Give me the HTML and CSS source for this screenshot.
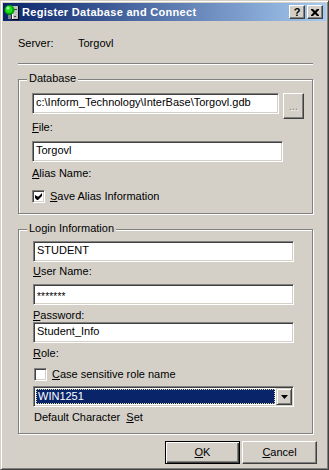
FILE: index.html
```html
<!DOCTYPE html>
<html>
<head>
    <meta charset="utf-8">
    <title>Register Database and Connect</title>
    <link rel="stylesheet" href="styles.css">
</head>
<body>
<div class="window">
    <div class="titlebar">
        <svg class="app-icon" width="16" height="16" viewBox="0 0 16 16">
            <rect x="8" y="2" width="7" height="14" fill="#c0c0c0"/>
            <rect x="8" y="2" width="1" height="14" fill="#fff"/>
            <rect x="14" y="2" width="1" height="14" fill="#000"/>
            <rect x="8" y="15" width="7" height="1" fill="#000"/>
            <rect x="10" y="5" width="3" height="1" fill="#404040"/>
            <rect x="10" y="12" width="2" height="1" fill="#404040"/>
            <circle cx="5.5" cy="6" r="5" fill="#00a000"/>
            <circle cx="5" cy="5.5" r="3.5" fill="#20e020"/>
            <circle cx="4" cy="4" r="1.5" fill="#b0ffb0"/>
            <rect x="4" y="11" width="3" height="4" fill="#808080"/>
        </svg>
        <span class="title">Register Database and Connect</span>
        <span class="tb-btn help">?</span>
        <span class="tb-btn close">
            <svg width="8" height="7" viewBox="0 0 8 7">
                <path d="M0 0h2l2 2 2-2h2v1l-2.5 2.5 2.5 2.5v1h-2l-2-2-2 2h-2v-1l2.5-2.5-2.5-2.5z" fill="#000"/>
            </svg>
        </span>
    </div>

    <div class="content">
        <div class="server-row">
            <span class="server-label">Server:</span>
            <span>Torgovl</span>
        </div>
        <div class="separator"></div>

        <div class="group group-db">
            <span class="legend">Database</span>
            <div class="path-row">
                <div class="edit edit-path">c:\Inform_Technology\InterBase\Torgovl.gdb</div>
                <div class="btn browse">...</div>
            </div>
            <div class="label label-file"><u>F</u>ile:</div>
            <div class="edit edit-file">Torgovl</div>
            <div class="label label-alias"><u>A</u>lias Name:</div>
            <div class="check check-alias">
                <span class="box">
                    <svg width="7" height="7" viewBox="0 0 7 7"><path d="M0 2v3l2 2h1l4-4v-3l-3.5 3.5h-1z" fill="#000"/></svg>
                </span>
                <span><u>S</u>ave Alias Information</span>
            </div>
        </div>

        <div class="group group-login">
            <span class="legend">Login Information</span>
            <div class="edit edit-login">STUDENT</div>
            <div class="label label-user"><u>U</u>ser Name:</div>
            <div class="edit edit-login edit-pass"><span class="mask">*******</span></div>
            <div class="label label-pass"><u>P</u>assword:</div>
            <div class="edit edit-login">Student_Info</div>
            <div class="label label-role"><u>R</u>ole:</div>
            <div class="check check-case">
                <span class="box"></span>
                <span><u>C</u>ase sensitive role name</span>
            </div>
            <div class="combo">
                <div class="combo-value">WIN1251</div>
                <div class="combo-arrow">
                    <svg width="7" height="4" viewBox="0 0 7 4"><path d="M0 0h7l-3.5 4z" fill="#000"/></svg>
                </div>
            </div>
            <div class="label label-charset">Default Character&nbsp; <u>S</u>et</div>
        </div>

        <div class="buttons">
            <div class="btn btn-default"><u>O</u>K</div>
            <div class="btn"><u>C</u>ancel</div>
        </div>
    </div>
</div>
</body>
</html>
```

FILE: styles.css
```css
body {
    margin: 0;
    background: #d4d0c8;
    font-family: "Liberation Sans", Arial, sans-serif;
    font-size: 11px;
    line-height: 13px;
    color: #000;}

.window {
    width: 329px;
    height: 470px;
    box-sizing: border-box;
    border: 1px solid;
    border-color: #d4d0c8 #404040 #404040 #d4d0c8;
    box-shadow: inset 1px 1px #fff, inset -1px -1px #808080;
    padding: 2px;}

/* title bar */
.titlebar {
    height: 18px;
    display: flex;
    align-items: center;
    background: linear-gradient(to right, #0a246a, #a6caf0);}

.app-icon {
    margin-left: 1px;
    flex: none;}

.title {
    flex: 1;
    margin-left: 2px;
    color: #fff;
    font-weight: bold;
    font-size: 11px;
    letter-spacing: 0.3px;}

.tb-btn {
    width: 16px;
    height: 14px;
    box-sizing: border-box;
    display: flex;
    align-items: center;
    justify-content: center;
    background: #d4d0c8;
    border: 1px solid;
    border-color: #fff #404040 #404040 #fff;
    box-shadow: inset -1px -1px #808080;
    font-weight: bold;
    font-size: 11px;}

.help {
    margin-right: 2px;}

.close {
    margin-right: 3px;}

/* body of the dialog */
.content {
    padding: 0 9px 0 15px;}

.server-row {
    margin-top: 16px;
    display: flex;}

.server-label {
    width: 60px;}

.separator {
    width: 295px;
    margin-top: 13px;
    border-top: 1px solid #808080;
    border-bottom: 1px solid #fff;}

.group {
    position: relative;
    width: 295px;
    box-sizing: border-box;
    border: 1px solid #808080;
    box-shadow: inset 1px 1px #fff, 1px 1px #fff;}

.legend {
    position: absolute;
    left: 8px;
    top: -8px;
    padding: 0 2px;
    background: #d4d0c8;}

.group-db {
    margin-top: 14px;
    padding: 13px 0 10px 13px;}

.group-login {
    margin-top: 15px;
    padding: 11px 0 9px 14px;}

/* sunken edit */
.edit {
    height: 21px;
    box-sizing: border-box;
    padding: 2px 3px 0;
    background: #fff;
    border: 1px solid;
    border-color: #808080 #fff #fff #808080;
    box-shadow: inset 1px 1px #404040, inset -1px -1px #d4d0c8;
    white-space: nowrap;
    overflow: hidden;}

.mask {
    font-size: 10px;
    vertical-align: -3px;
    letter-spacing: 0.2px;}

.path-row {
    display: flex;
    align-items: flex-start;}

.edit-path {
    width: 247px;}

.edit-file {
    width: 251px;
    margin-top: 7px;}

.edit-login {
    width: 261px;}

.edit-pass {
    margin-top: 6px;}

/* raised button */
.btn {
    box-sizing: border-box;
    display: flex;
    align-items: center;
    justify-content: center;
    background: #d4d0c8;
    border: 1px solid;
    border-color: #fff #404040 #404040 #fff;
    box-shadow: inset -1px -1px #808080;}

.browse {
    width: 21px;
    height: 26px;
    margin-left: 4px;
    color: #808080;
    text-shadow: 1px 1px #fff;}

.label-file {
    margin-top: 2px;}

.label-alias {
    margin-top: 5px;}

.label-user {
    margin-top: 3px;}

.label-pass {
    margin-top: 4px;}

.label-role {
    margin-top: 4px;}

.label-charset {
    margin-top: 4px;
    padding-left: 1px;}

.check {
    display: flex;
    align-items: center;
    gap: 5px;
    height: 13px;}

.check-alias {
    margin-top: 10px;}

.check-case {
    margin-top: 8px;
    padding-left: 1px;}

.box {
    width: 13px;
    height: 13px;
    box-sizing: border-box;
    display: flex;
    align-items: center;
    justify-content: center;
    background: #fff;
    border: 1px solid;
    border-color: #808080 #fff #fff #808080;
    box-shadow: inset 1px 1px #404040, inset -1px -1px #d4d0c8;}

/* combo box */
.combo {
    width: 261px;
    height: 21px;
    margin-top: 5px;
    box-sizing: border-box;
    display: flex;
    padding: 1px;
    background: #fff;
    border: 1px solid;
    border-color: #808080 #fff #fff #808080;
    box-shadow: inset 1px 1px #404040, inset -1px -1px #d4d0c8;}

.combo-value {
    flex: 1;
    margin: 1px;
    padding: 0 1px;
    background: #0a246a;
    color: #fff;
    border: 1px dotted #d8d8a0;
    line-height: 13px;}

.combo-arrow {
    width: 16px;
    box-sizing: border-box;
    display: flex;
    align-items: center;
    justify-content: center;
    background: #d4d0c8;
    border: 1px solid;
    border-color: #d4d0c8 #404040 #404040 #d4d0c8;
    box-shadow: inset 1px 1px #fff, inset -1px -1px #808080;}

/* dialog buttons */
.buttons {
    margin-top: 7px;
    display: flex;
    justify-content: flex-end;
    gap: 2px;}

.buttons .btn {
    width: 75px;
    height: 23px;}

.btn-default {
    border-color: #000;
    box-shadow: inset 1px 1px #fff, inset -1px -1px #404040, inset -2px -2px #808080;}
```
